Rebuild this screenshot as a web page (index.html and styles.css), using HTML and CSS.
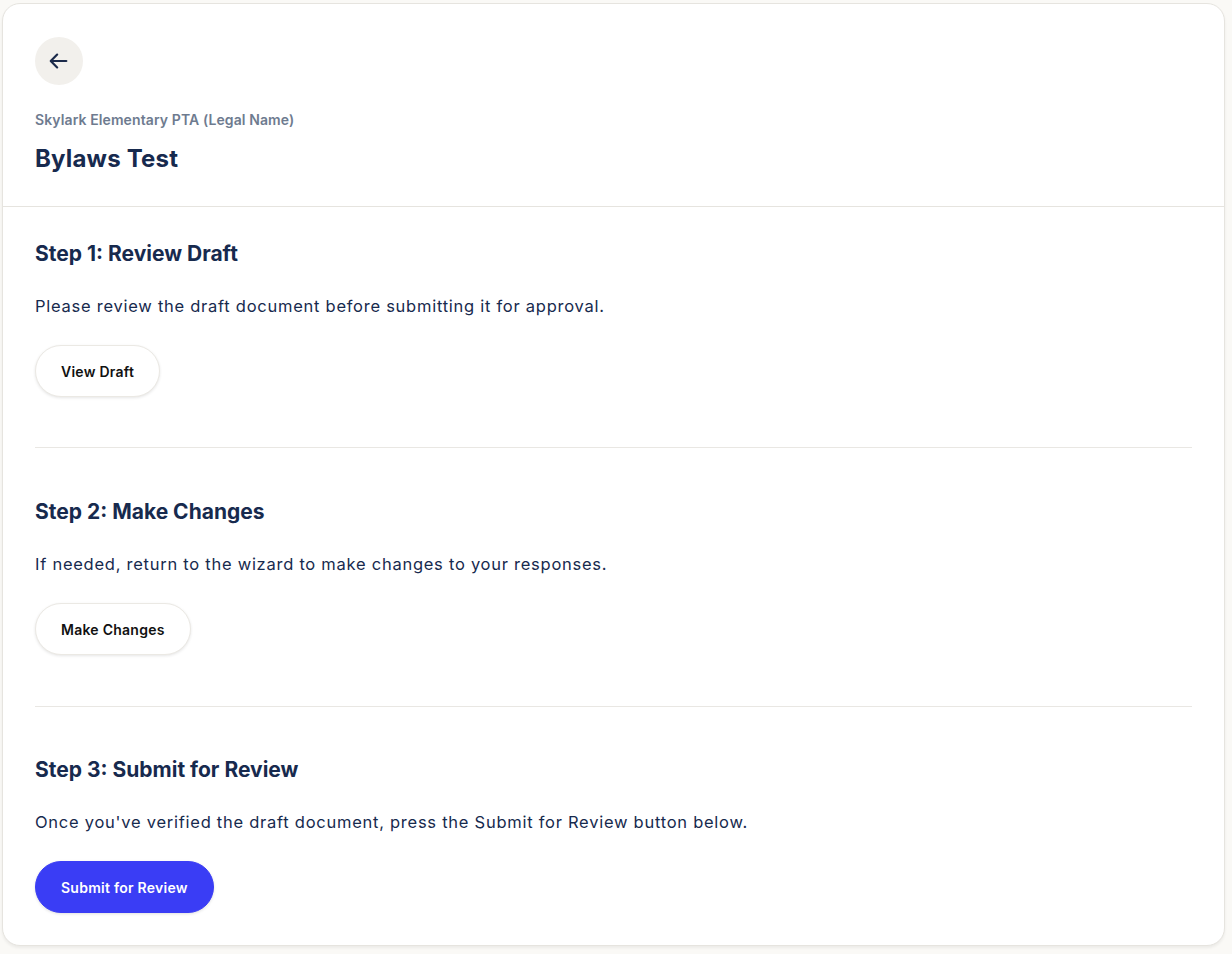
FILE: index.html
```html
<!DOCTYPE html>
<html lang="en">
<head>
<meta charset="utf-8">
<title>Bylaws Test</title>
<link rel="stylesheet" href="styles.css">
</head>
<body>
<main class="card">
  <header class="card-header">
    <button class="back-btn" aria-label="Back">
      <svg width="22" height="22" viewBox="0 0 24 24" fill="none" stroke="#1b2a4a" stroke-width="2.4" stroke-linecap="round" stroke-linejoin="round"><path d="M20 12H4"/><path d="M10 5l-7 7 7 7"/></svg>
    </button>
    <div class="org">Skylark Elementary PTA (Legal Name)</div>
    <h1 class="title">Bylaws Test</h1>
  </header>
  <div class="steps">
    <section class="step">
      <h2 class="step-title">Step 1: Review Draft</h2>
      <p class="step-text">Please review the draft document before submitting it for approval.</p>
      <button class="btn btn-outline">View Draft</button>
    </section>
    <section class="step">
      <h2 class="step-title">Step 2: Make Changes</h2>
      <p class="step-text">If needed, return to the wizard to make changes to your responses.</p>
      <button class="btn btn-outline">Make Changes</button>
    </section>
    <section class="step">
      <h2 class="step-title">Step 3: Submit for Review</h2>
      <p class="step-text">Once you've verified the draft document, press the Submit for Review button below.</p>
      <button class="btn btn-primary">Submit for Review</button>
    </section>
  </div>
</main>
</body>
</html>
```
FILE: styles.css
```css
* { box-sizing: border-box; }
html, body { margin: 0; padding: 0; }
body {
  background: #faf9f6;
  font-family: Inter, "Noto Sans", sans-serif;
  color: #172a4e;
  padding: 3px 7px 8px 2px;
}
.card {
  background: #fff;
  border: 1px solid #e6e4df;
  border-radius: 18px;
  box-shadow: 0 2px 3px rgba(0,0,0,0.06);
  height: 943px;
}
.card-header {
  padding: 33px 32px 31px;
  border-bottom: 1px solid #e6e4df;
}
.back-btn {
  width: 48px;
  height: 48px;
  border-radius: 50%;
  border: none;
  background: #f2f0ec;
  display: flex;
  align-items: center;
  justify-content: center;
  padding: 0;
  cursor: pointer;
}
.org {
  margin-top: 25px;
  font-size: 14px;
  line-height: 20px;
  font-weight: 600;
  color: #6e7b8f;
  letter-spacing: 0.1px;
}
.title {
  margin: 13px 0 0;
  font-size: 24px;
  line-height: 32px;
  font-weight: 700;
  letter-spacing: 0.2px;
}
.steps {
  padding: 0 32px;
}
.step {
  padding: 50px 0 50px;
  border-bottom: 1px solid #e9e7e3;
}
.step:first-child { padding-top: 33px; }
.step:nth-child(2) { padding-bottom: 51px; }
.step:last-child { border-bottom: none; padding-top: 49px; padding-bottom: 32px; }
.step-title {
  margin: 0 0 26px;
  font-size: 21px;
  line-height: 28px;
  font-weight: 700;
  letter-spacing: 0;
}
.step-text {
  margin: 0 0 27px;
  font-size: 16.5px;
  line-height: 24px;
  font-weight: 400;
  letter-spacing: 0.74px;
}
.btn {
  height: 52px;
  padding: 0 25px;
  border-radius: 26px;
  font-family: inherit;
  font-size: 14px;
  font-weight: 600;
  letter-spacing: 0.25px;
  cursor: pointer;
  display: inline-flex;
  align-items: center;
}
.btn-outline {
  background: #fff;
  color: #111;
  border: 1px solid #ebe9e4;
  box-shadow: 0 1px 3px rgba(0,0,0,0.1);
}
.btn-primary {
  background: #3a3df5;
  color: #fff;
  border: 1px solid #3a3df5;
  box-shadow: 0 1px 3px rgba(0,0,0,0.12);
}
```
